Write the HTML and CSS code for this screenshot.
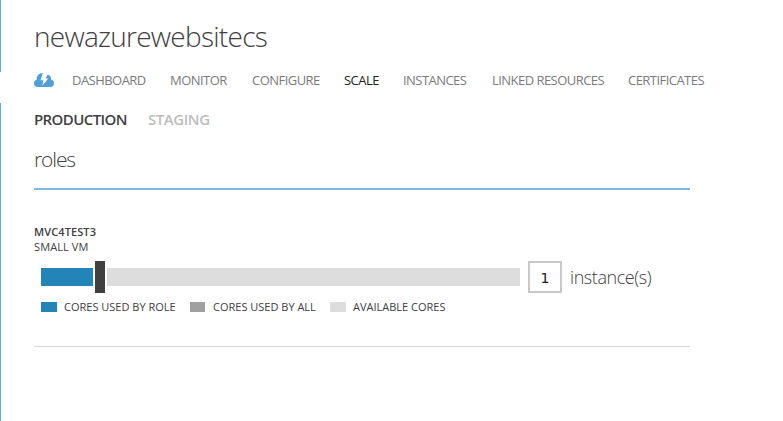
FILE: index.html
```html
<!DOCTYPE html>
<html lang="en">
<head>
<meta charset="utf-8">
<title>newazurewebsitecs</title>
<link rel="stylesheet" href="styles.css">
</head>
<body>
<div class="shell">
<aside class="rail"><span class="rail-top"></span><span class="rail-bottom"></span></aside>
<main class="content">
<h1 class="title"><span>newazurewebsitecs</span></h1>
<nav class="tabs">
<svg class="cloud" viewBox="0 0 20 14" aria-hidden="true"><path fill="#4f9fd9" d="M3.200 14Q0 13.500 0 10.300Q0 7.300 2.700 6.700Q2.500 3 4.800 1.200Q6.500 0 9.500 0L12 1.800Q14.500 1.300 16 3Q17.300 4.500 17.100 6.400Q20 7.500 20 10.500Q19.800 13.500 17 14Z"/><path fill="#fff" d="M8.800 0L6.600 7.200H9.300L8.300 12.700L14.300 5.500H11.500L13.600 1.500L11.800 0Z"/></svg>
<a>DASHBOARD</a><a>MONITOR</a><a>CONFIGURE</a><a class="active">SCALE</a><a>INSTANCES</a><a>LINKED RESOURCES</a><a>CERTIFICATES</a>
</nav>
<nav class="slots"><a class="selected">PRODUCTION</a><a class="staging">STAGING</a></nav>
<h2 class="section-title"><span>roles</span></h2>
<section class="role">
<div class="role-name">MVC4TEST3</div>
<div class="role-size">SMALL VM</div>
<div class="scale-row">
<div class="slider"><span class="used"></span><span class="thumb"></span><span class="available"></span></div>
<div class="count">1</div>
<span class="unit">instance(s)</span>
</div>
<div class="legend"><i class="swatch blue"></i><span class="by-role">CORES USED BY ROLE</span><i class="swatch gray"></i><span class="by-all">CORES USED BY ALL</span><i class="swatch light"></i><span class="free">AVAILABLE CORES</span></div>
</section>
</main>
</div>
</body>
</html>
```
FILE: styles.css
```css
* { box-sizing: border-box; }
body { margin: 0; background: #fff; color: #404040; font-family: "Open Sans", "Noto Sans", sans-serif; overflow: hidden; }
.shell { display: flex; height: 421px; }
.rail { width: 1px; display: flex; flex-direction: column; justify-content: space-between; }
.rail span { background: #64acd5; }
.rail-top { height: 72px; }
.rail-bottom { height: 318px; }
.content { padding: 17px 0 0 33px; white-space: nowrap; }
h1, h2 { margin: 0; font-weight: 300; }
.title { height: 50px; font-size: 28px; line-height: 39px; letter-spacing: -.73px; }
.tabs { display: grid; grid-template-columns: 38px 98px 82px 92px 59px 89px 136px 80px; align-items: center; height: 27px; font-size: 13px; letter-spacing: -.54px; color: #7b7b7b; }
.tabs a { margin-top: -2px; }
.cloud { width: 20px; height: 14px; position: relative; top: -1px; }
.active { color: #222; }
.slots { display: grid; grid-template-columns: 114px 80px; height: 50px; line-height: 51px; font-size: 15px; font-weight: 600; letter-spacing: -.6px; }
.staging { color: #bdbdbd; letter-spacing: -.45px; }
.section-title { width: 656px; height: 46px; border-bottom: 2px solid #83b6e1; font-size: 21px; line-height: 31px; letter-spacing: -1.1px; }
.role { width: 656px; height: 157px; border-bottom: 1px solid #d8d8d8; padding-top: 34px; font-size: 11px; line-height: 15px; }
.role-name { font-weight: 600; letter-spacing: .1px; }
.role-size { letter-spacing: .1px; }
.scale-row { display: flex; align-items: center; height: 32px; margin: 7px 0 0 7px; }
.slider { display: flex; align-items: center; width: 479px; height: 32px; }
.used { width: 52px; height: 18px; background: #2385b7; }
.thumb { width: 10px; height: 32px; margin: 0 2px; background: #404040; }
.available { flex: 1; height: 18px; background: #ddd; }
.count { width: 34px; height: 32px; margin-left: 8px; border: 2px solid #c8c8c8; line-height: 31px; font-family: "DejaVu Sans", sans-serif; font-size: 14px; color: #222; text-align: center; }
.unit { margin-left: 8px; font-size: 18px; font-weight: 300; line-height: 30px; letter-spacing: -.43px; }
.legend { display: grid; grid-template-columns: 23px 126px 23px 117px 23px 100px; align-items: center; height: 16px; margin: 6px 0 0 7px; font-size: 11px; letter-spacing: 0; }
.legend span { margin-top: -2px; }
.swatch { width: 16px; height: 10px; }
.blue { background: #2385b7; }
.gray { width: 15px; background: #a0a0a0; }
.light { background: #ddd; }
```
